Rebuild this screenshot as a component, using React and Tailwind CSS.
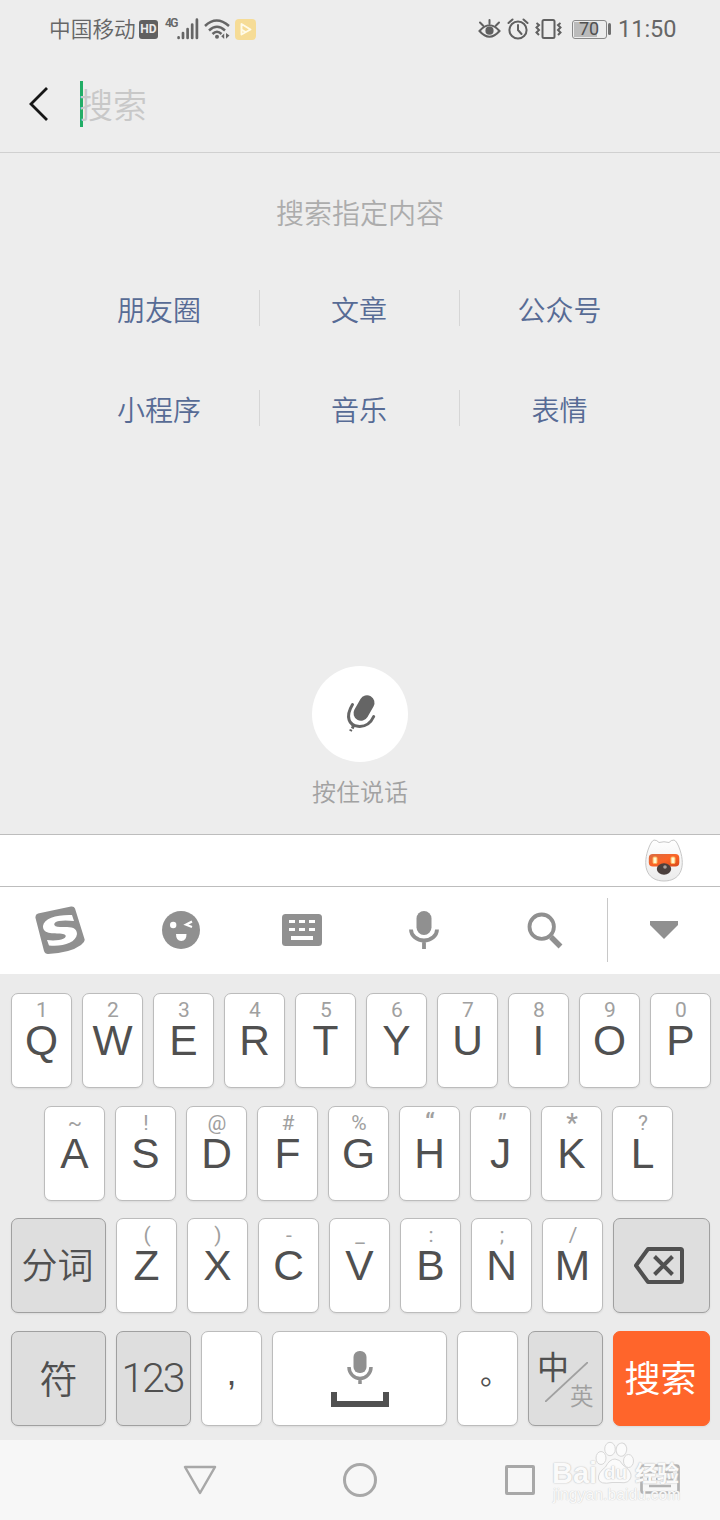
import React from "react";

const cjk = "font-['Noto_Sans_CJK_SC',sans-serif]";

function StatusBar() {
  return (
    <div className="flex h-14 items-center justify-between pt-0.5 pl-[49px] pr-[44px] text-[#666]">
      <div className="flex items-center">
        <span className="-mt-[3px] w-[90px] text-[21.7px] leading-8 whitespace-nowrap font-[350]">中国移动</span>
        <span className="flex h-[19px] w-[19px] items-center justify-center rounded-[3px] bg-[#606060] font-['Roboto',sans-serif] text-[12px] font-bold leading-none text-[#ececec]">HD</span>
        <span className="ml-[7px] mb-3 w-[12px] font-['Roboto',sans-serif] text-[12px] font-semibold leading-none tracking-[-1.5px]">4G</span>
        <svg width="22" height="22" viewBox="0 0 22 22" stroke="#666" strokeWidth="2.7" strokeLinecap="round">
          <path d="M1.6 20v-.6M6 20v-5M10.6 20v-9M15.2 20V6.5M19.9 20V1.7" />
        </svg>
        <svg className="ml-[5px]" width="27" height="22" viewBox="0 0 27 22" fill="none" stroke="#666" strokeWidth="2.5">
          <path d="M1 8Q12.500-3 25 8M5 12.500Q13 5 21 12.500M8.500 16Q13 11.500 17.500 16" />
          <circle cx="13" cy="18.700" r="2" fill="#666" stroke="none" />
          <path d="M20.200 15.500V21l-3-2.700zM22 15v5.800l3.500-3.200z" fill="#666" stroke="none" />
        </svg>
        <svg className="ml-[4px]" width="21" height="21" viewBox="0 0 21 21">
          <rect width="21" height="21" rx="4" fill="#f6dc96" />
          <path d="M6.500 15.500V5l9 5.500-9 5zM6.500 10.500l4 2.500" fill="none" stroke="#fffbe8" strokeWidth="1.900" strokeLinejoin="round" />
        </svg>
      </div>
      <div className="flex items-center">
        <svg width="23" height="22" viewBox="0 0 23 22" fill="none" stroke="#606060" strokeWidth="2" strokeLinecap="round">
          <path d="M1.500 13Q11.500 1.500 21.500 13Q11.500 24.500 1.500 13zM11.500 5.500V2M5 7.500L2 4.500M18 7.500l3-3" />
          <circle cx="11.500" cy="12.700" r="4.100" fill="#606060" stroke="none" />
        </svg>
        <svg className="ml-[6px]" width="22" height="22" viewBox="0 0 22 22" fill="none" stroke="#606060" strokeWidth="2" strokeLinecap="round">
          <circle cx="11" cy="12" r="8.600" />
          <path d="M11 7v5l3.500 4M1.500 5l4-3.500M20.500 5l-4-3.500" />
        </svg>
        <svg className="ml-[6px]" width="27" height="22" viewBox="0 0 27 22" fill="none" stroke="#606060" strokeWidth="2">
          <rect x="7.500" y="2" width="12" height="18" rx="1.500" />
          <path d="M1.500 5l2.500 2-2.500 2.500L4 12l-2.500 2.500L4 17M25.500 5L23 7l2.500 2.500L23 12l2.500 2.500L23 17" />
        </svg>
        <div className="ml-[10px] flex h-[19px] w-[35px] items-center rounded-[3px] border border-[#888] p-px">
          <div className="flex h-full w-[23px] justify-center bg-[#bbb]">
            <span className="ml-[7px] font-['Roboto',sans-serif] text-[18px] leading-[13px] text-[#505050]">70</span>
          </div>
        </div>
        <div className="ml-[1px] h-[12px] w-[3px] rounded-sm bg-[#707070]" />
        <span className="ml-[7px] w-[58px] whitespace-nowrap font-['Roboto',sans-serif] text-[23.500px] leading-8">11:50</span>
      </div>
    </div>
  );
}

function SearchBar() {
  return (
    <div className="flex h-[97px] items-center border-b border-[#d0d0d0] pl-[28px]">
      <svg width="22" height="36" viewBox="0 0 22 36" fill="none" stroke="#161616" strokeWidth="2.800">
        <path d="M19 2L3 18l16 16" />
      </svg>
      <div className="ml-[30px] h-[46px] w-[3px] bg-[#22ad66]" />
      <span className="-ml-[4px] text-[34px] font-[350] leading-[46px] text-[#c8c8c8]">搜索</span>
    </div>
  );
}

const topics = ["朋友圈", "文章", "公众号", "小程序", "音乐", "表情"];

function Topics() {
  return (
    <div className="flex h-[681px] flex-col items-center">
      <div className="mt-[39px] text-[28px] leading-10 font-[350] text-[#acacac]">搜索指定内容</div>
      <div className="mt-[26px] grid grid-cols-[200px_200px_200px]">
        {topics.map((t, i) => (
          <div key={t} className="flex h-[100px] items-center">
            <div className="flex-1 pt-px pr-px text-center text-[28px] leading-10 font-[350] text-[#576b95]">{t}</div>
            {i % 3 < 2 && <div className="h-9 w-px bg-[#d6d6d6]" />}
          </div>
        ))}
      </div>
      <div className="mt-[208px] flex h-24 w-24 items-center justify-center rounded-full bg-white">
        <svg width="36" height="44" viewBox="342 692 36 44" fill="none" stroke="#656565">
          <path d="M361 713.300l6-10.500" strokeWidth="15" strokeLinecap="round" />
          <path d="M352.500 704.500C345 717 349 725.500 358 726.300C366 727 371 722.500 373.700 716.500" strokeWidth="3" strokeLinecap="round" />
          <path d="M353.700 725.500l-1.500 3M351.200 729.500l-.8 1.700" strokeWidth="2.800" />
        </svg>
      </div>
      <div className="mt-[13px] text-[24px] leading-8 font-[350] text-[#a2a2a2]">按住说话</div>
    </div>
  );
}

function Mic({ className }) {
  return (
    <svg className={className} width="30" height="38" viewBox="0 0 30 38" fill="none">
      <rect x="7.500" width="15" height="24" rx="7.500" fill="#909090" />
      <path d="M2 18.500a13 11 0 0 0 26 0M15 30v8" stroke="#909090" strokeWidth="3.800" />
    </svg>
  );
}

function Toolbar() {
  return (
    <div className="bg-white">
      <div className="flex h-[53px] justify-end border-y border-[#bdbdbd] pr-[36px] pt-[4px]">
        <svg width="40" height="44" viewBox="0 0 40 44">
          <defs>
            <linearGradient id="visor" x1="0" y1="0" x2="1" y2="1">
              <stop stopColor="#d86b43" />
              <stop offset=".5" stopColor="#fb6427" />
              <stop offset="1" stopColor="#d94a1b" />
            </linearGradient>
            <linearGradient id="face" x1="0" y1="0" x2="0" y2="1">
              <stop stopColor="#fff" />
              <stop offset="1" stopColor="#ebebeb" />
            </linearGradient>
          </defs>
          <path d="M10 1Q7 2 4 11C-2 29 4 42 20 42S42 29 36 11Q33 2 30 1Q27 1 25 3.500Q20 2 15 3.500Q13 1 10 1z" fill="url(#face)" stroke="#c7c7c7" />
          <rect x="4.800" y="15" width="30.500" height="12.500" rx="4" fill="url(#visor)" />
          <rect x="9" y="18" width="4" height="6.500" rx="1" fill="#fff7cf" stroke="#ffb35a" />
          <rect x="27" y="18" width="4" height="6.500" rx="1" fill="#fff7cf" stroke="#ffb35a" />
          <ellipse cx="20" cy="30" rx="7.200" ry="5.700" fill="#4b3f3c" />
          <circle cx="21" cy="28" r="1.800" fill="#a79e9a" />
        </svg>
      </div>
      <div className="flex h-[87px] items-center pb-px">
        <svg className="ml-[35px]" width="50" height="48" viewBox="0 0 50 48">
          <path d="M3 7.500L36 .5Q39 0 40 2.500L49.500 33Q50.500 36 46 39Q35 47 13 48Q10 48 9 45L.5 12Q0 8.500 3 7.500z" fill="#909090" />
          <path d="M37 9C22 8.500 9 12 8 20C7.500 29 21 27 28 28C33 29 31 33 24 34C20 34.500 16 34.500 12 34L14 39.500C27 41 41 37 42 28C42 20 33 21 25 21C17 21 18 16 24 15C29 14 34 14.500 39 15z" fill="#fff" />
        </svg>
        <svg className="ml-[77px]" width="38" height="38" viewBox="0 0 38 38">
          <circle cx="19" cy="19" r="19" fill="#909090" />
          <circle cx="11.200" cy="14" r="3.200" fill="#fff" />
          <path d="M30 10.500l-6 3.200L30 16" fill="none" stroke="#fff" strokeWidth="2.200" />
          <path d="M14 23h10.500q0 7-5.250 7T14 23z" fill="#fff" />
        </svg>
        <svg className="ml-[82px]" width="40" height="32" viewBox="0 0 40 32">
          <rect width="40" height="32" rx="3.500" fill="#909090" />
          <path d="M7 7.500h6m4 0h6m4 0h6M7 15.500h6m4 0h6m4 0h6" stroke="#fff" strokeWidth="3" />
          <path d="M9 24h22" stroke="#fff" strokeWidth="4" />
        </svg>
        <Mic className="ml-[87px]" />
        <svg className="ml-[88px]" width="37" height="37" viewBox="0 0 37 37" fill="none" stroke="#909090">
          <circle cx="14.700" cy="14.700" r="12.200" strokeWidth="3.800" />
          <path d="M24 25l9.500 9.500" strokeWidth="5.500" />
        </svg>
        <div className="ml-[43px] h-16 w-px bg-[#c8c8c8]" />
        <svg className="ml-[42px]" width="28" height="18" viewBox="0 0 28 18">
          <path d="M0 0h28v4L14 18 0 4z" fill="#909090" />
        </svg>
      </div>
    </div>
  );
}

const keyBase = "flex h-[95px] shrink-0 rounded-[7px] border shadow-[0_1px_2px_rgba(0,0,0,0.08)]";
const white = "border-[#bcbcbc] bg-white";
const grey = "border-[#a0a0a0] bg-[#dedede]";

function LetterKey({ label, hint }) {
  const heavy = hint === "*" || hint === "“" || hint === "”";
  return (
    <div className={`${keyBase} ${white} w-[61px] flex-col items-center font-['Liberation_Sans',sans-serif]`}>
      <span className={`mt-1 h-6 pl-px font-['Roboto',sans-serif] leading-6 text-[#a0a0a0] ${heavy ? "text-[26px] font-medium" : "text-[21px]"} ${hint === "”" ? "italic" : ""}`}>{hint === "”" ? "\"" : hint}</span>
      <span className="text-[42.500px] leading-[38px] text-[#505050]">{label}</span>
    </div>
  );
}

function Letters({ labels, hints }) {
  return labels.map((l, i) => <LetterKey key={l} label={l} hint={hints[i]} />);
}

function Keyboard() {
  return (
    <div className="h-[466px] bg-[#ebebeb] pt-[19px]">
      <div className="flex gap-[10px] pl-[11px]">
        <Letters labels={[..."QWERTYUIOP"]} hints={[..."1234567890"]} />
      </div>
      <div className="mt-[18px] flex gap-[10px] pl-[44px]">
        <Letters labels={[..."ASDFGHJKL"]} hints={[..."~!@#%“”*?"]} />
      </div>
      <div className="mt-[17px] flex gap-[10px] pl-[11px]">
        <div className={`${keyBase} ${grey} w-[95px] items-center justify-center pr-[2px] pb-[5px] text-[36px] font-[350] text-[#505050]`}>分词</div>
        <Letters labels={[..."ZXCVBNM"]} hints={[..."()-_:;/"]} />
        <div className={`${keyBase} ${grey} w-[97px] items-center justify-center`}>
          <svg className="-ml-[5px]" width="50" height="37" viewBox="0 0 50 37" fill="none" stroke="#505050">
            <path d="M14 2h32.500q1.500 0 1.500 1.500v30q0 1.500-1.500 1.500H14L2 18.500z" strokeWidth="4" strokeLinejoin="round" />
            <path d="M20.500 9.500l18 18M38.500 9.500l-18 18" strokeWidth="4" />
          </svg>
        </div>
      </div>
      <div className="mt-[18px] flex gap-[10px] pl-[11px]">
        <div className={`${keyBase} ${grey} w-[95px] items-center justify-center pb-[4px] text-[38px] font-[350] text-[#505050]`}>符</div>
        <div className={`${keyBase} ${grey} w-[75px] items-center justify-center pr-[2px] font-['Roboto',sans-serif] text-[41px] font-light tracking-[-2px] text-[#505050]`}>123</div>
        <div className={`${keyBase} ${white} w-[61px] justify-center font-['Liberation_Sans',sans-serif] text-[36px] leading-[82px] text-[#505050]`}>,</div>
        <div className={`${keyBase} ${white} w-[175px] flex-col items-center`}>
          <svg className="mt-[19px]" width="30" height="34" viewBox="0 0 30 34" fill="none">
            <rect x="8.500" width="13" height="22" rx="6" fill="#909090" />
            <path d="M4 16a11 11.500 0 0 0 22 0M15 27v6" stroke="#909090" strokeWidth="3.500" />
          </svg>
          <div className="mt-[7px] h-[15px] w-[58px] border-x-[6px] border-b-[6px] border-[#505050]" />
        </div>
        <div className={`${keyBase} ${white} w-[61px] items-center justify-center`}>
          <span className="-mt-[15px] -mr-[15px] text-[30px] leading-10 text-[#505050]">。</span>
        </div>
        <div className={`${keyBase} ${grey} relative w-[75px]`}>
          <span className="ml-[8px] mt-[13px] text-[32px] leading-10 text-[#505050]">中</span>
          <svg className="absolute left-[16px] top-[30px]" width="43" height="40" viewBox="0 0 43 40" stroke="#a0a0a0" strokeWidth="1.800">
            <path d="M0 40L43 0" />
          </svg>
          <span className="absolute left-[41px] top-[47px] text-[23.500px] leading-8 font-[350] text-[#a0a0a0]">英</span>
        </div>
        <div className={`${keyBase} w-[97px] items-center justify-center border-[#ff652b] bg-[#ff652b] pr-[2px] pb-[6px] text-[36px] text-white`}>搜索</div>
      </div>
    </div>
  );
}

function Watermark() {
  return (
    <div className="absolute left-[552px] top-0 h-[80px] w-[135px] text-[#fafafa] [text-shadow:0_0_1px_#bcbcbc,0_0_2px_#cfcfcf]">
      <span className="absolute left-0 top-[17px] font-['Liberation_Sans',sans-serif] text-[29px] font-bold leading-8">Bai</span>
      <svg className="absolute left-[43px] top-[1px]" width="40" height="44" viewBox="0 0 40 44" fill="#fbfbfb" stroke="#d8d8d8">
        <ellipse cx="6" cy="17" rx="5" ry="6.500" />
        <ellipse cx="15" cy="8" rx="5.300" ry="6.700" />
        <ellipse cx="26.500" cy="8.500" rx="5.300" ry="6.700" transform="rotate(8 26 8)" />
        <ellipse cx="33.500" cy="20" rx="5" ry="6.500" />
        <path d="M20 18q5 0 8 6 9 6 8 12-2 7-11 5.500h-8Q5 44 3.500 38q-1-6 7-12 4-8 9.500-8z" />
      </svg>
      <span className="absolute left-[52px] top-[19px] font-['Liberation_Sans',sans-serif] text-[19px] font-bold leading-7">du</span>
      <span className="absolute left-[83px] top-[15px] whitespace-nowrap text-[22px] font-bold leading-8">经验</span>
      <span className="absolute left-[1px] top-[45px] font-['Liberation_Sans',sans-serif] text-[15.800px] leading-5 [text-shadow:0_0_1px_#ccc,0_0_1px_#ddd]">jingyan.baidu.com</span>
    </div>
  );
}

function NavBar() {
  return (
    <div className="relative flex h-20 items-center bg-[#f7f7f7]">
      <svg className="ml-[183px]" width="34" height="30" viewBox="0 0 34 30" fill="none" stroke="#a8a8a8" strokeWidth="2.500" strokeLinejoin="round">
        <path d="M2 2h30L17 28z" />
      </svg>
      <div className="ml-[126px] h-[34px] w-[34px] rounded-full border-[3px] border-[#a8a8a8]" />
      <div className="ml-[128px] h-[30px] w-[30px] rounded-[2px] border-[3px] border-[#a8a8a8]" />
      <svg className="ml-[105px] -mt-0.5" width="40" height="30" viewBox="0 0 40 30" fill="none" stroke="#b2b2b2" strokeWidth="2.700">
        <rect x="1.500" y="1.500" width="37" height="27" rx="2" />
        <path d="M7 8h5m4 0h5m4 0h8M7 15h5m4 0h5m4 0h8M9 22h22" />
      </svg>
      <Watermark />
    </div>
  );
}

export default function App() {
  return (
    <div className={`h-[1520px] w-[720px] overflow-hidden bg-[#ededed] ${cjk}`}>
      <StatusBar />
      <SearchBar />
      <Topics />
      <Toolbar />
      <Keyboard />
      <NavBar />
    </div>
  );
}
